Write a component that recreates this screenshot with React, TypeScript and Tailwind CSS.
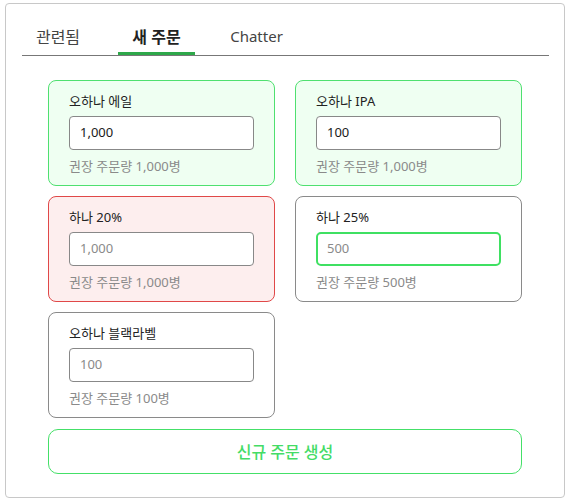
import React from 'react';

type Tone = 'ok' | 'warn' | 'none';

const items: { name: string; value: string; filled: boolean; hint: string; tone: Tone; focus?: boolean }[] = [
  { name: '오하나 에일', value: '1,000', filled: true, hint: '권장 주문량 1,000병', tone: 'ok' },
  { name: '오하나 IPA', value: '100', filled: true, hint: '권장 주문량 1,000병', tone: 'ok' },
  { name: '하나 20%', value: '1,000', filled: false, hint: '권장 주문량 1,000병', tone: 'warn' },
  { name: '하나 25%', value: '500', filled: false, hint: '권장 주문량 500병', tone: 'none', focus: true },
  { name: '오하나 블랙라벨', value: '100', filled: false, hint: '권장 주문량 100병', tone: 'none' },
];

const toneClass: Record<Tone, string> = {
  ok: 'border-[#4fe070] bg-[#effff2]',
  warn: 'border-[#e04848] bg-[#fdeeee]',
  none: 'border-[#8a8a8a] bg-white',
};

function ProductCard({ item }: { item: (typeof items)[number] }) {
  return (
    <div className={`flex h-[106px] flex-col rounded-[8px] border pl-[20px] pr-[20px] pt-[11px] ${toneClass[item.tone]}`}>
      <div className="text-[13px] leading-[18px] text-[#222]">{item.name}</div>
      <div
        className={
          item.focus
            ? 'mt-[6px] flex h-[34px] items-center rounded-[5px] border-2 border-[#3fe062] bg-white pl-[9px]'
            : 'mt-[6px] flex h-[34px] items-center rounded-[4px] border border-[#888] bg-white pl-[10px]'
        }
      >
        <span className={`text-[13px] ${item.filled ? 'text-[#1a1a1a]' : 'text-[#8a8a8a]'}`}>{item.value}</span>
      </div>
      <div className="mt-[7px] text-[13px] leading-[18px] text-[#8a8a8a]">{item.hint}</div>
    </div>
  );
}

export default function App() {
  return (
    <div className="h-[499px] w-[566px] bg-white pl-[5px] pt-[3px]" style={{ fontFamily: '"Noto Sans", "Noto Sans CJK KR", sans-serif' }}>
      <div className="h-[495px] w-[560px] rounded-[4px] border border-[#c8c8c8] px-[16px] pt-[17px]">
        {/* 탭 */}
        <div className="flex w-[527px] border-b border-[#777]">
          <div className="flex h-[34px] w-[72px] items-center justify-center pb-[3px] text-[16px] text-[#444]">관련됨</div>
          <div className="ml-[24px] flex h-[34px] w-[77px] items-center justify-center border-b-[3px] border-[#2ea84a] text-[16px] font-bold text-[#222]">
            새 주문
          </div>
          <div className="ml-[24px] flex h-[34px] w-[75px] items-center justify-center pb-[3px] text-[15px] text-[#444]">Chatter</div>
        </div>

        <div className="ml-[26px] mt-[24px] w-[474px]">
          <div className="grid grid-cols-2 gap-x-[20px] gap-y-[10px]">
            {items.map((it) => (
              <ProductCard key={it.name} item={it} />
            ))}
          </div>
          <button className="mt-[11px] flex h-[45px] w-[474px] items-center justify-center rounded-[10px] border border-[#44e068] bg-white text-[16px] font-medium text-[#44dc66]">
            신규 주문 생성
          </button>
        </div>
      </div>
    </div>
  );
}
